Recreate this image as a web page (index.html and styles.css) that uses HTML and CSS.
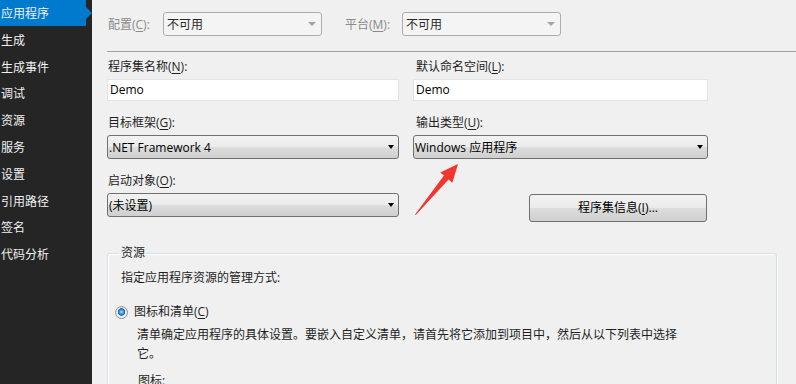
FILE: index.html
```html
<!DOCTYPE html>
<html lang="zh-CN">
<head>
    <meta charset="UTF-8">
    <title>属性 - 应用程序</title>
    <link rel="stylesheet" href="styles.css">
</head>

<body>

<div class="app">
    <ul class="sidebar">
        <li class="current">应用程序</li>
        <li>生成</li>
        <li>生成事件</li>
        <li>调试</li>
        <li>资源</li>
        <li>服务</li>
        <li>设置</li>
        <li>引用路径</li>
        <li>签名</li>
        <li>代码分析</li>
    </ul>

    <div class="main">
        <div class="topbar">
            <span class="top-label first">配置(<u>C</u>):</span>
            <div class="combo disabled"><span>不可用</span><i class="arrow"></i></div>
            <span class="top-label second">平台(<u>M</u>):</span>
            <div class="combo disabled"><span>不可用</span><i class="arrow"></i></div>
        </div>

        <div class="form">
            <div class="field">
                <label>程序集名称(<u>N</u>):</label>
                <div class="textbox">Demo</div>
            </div>
            <div class="field right">
                <label>默认命名空间(<u>L</u>):</label>
                <div class="textbox">Demo</div>
            </div>
            <div class="field">
                <label>目标框架(<u>G</u>):</label>
                <div class="combo"><span>.NET Framework 4</span><i class="arrow"></i></div>
            </div>
            <div class="field right">
                <label>输出类型(<u>U</u>):</label>
                <div class="combo"><span>Windows 应用程序</span><i class="arrow"></i></div>
            </div>
            <div class="field">
                <label>启动对象(<u>O</u>):</label>
                <div class="combo"><span>(未设置)</span><i class="arrow"></i></div>
            </div>
            <div class="field btn-cell">
                <div class="button">程序集信息(<u>I</u>)...</div>
            </div>
        </div>

        <fieldset class="group">
            <legend>资源</legend>
            <p class="intro">指定应用程序资源的管理方式:</p>
            <div class="radio-row">
                <span class="radio"></span>
                <span>图标和清单(<u>C</u>)</span>
            </div>
            <p class="desc">清单确定应用程序的具体设置。要嵌入自定义清单，请首先将它添加到项目中，然后从以下列表中选择它。</p>
            <p class="icon-label">图标:</p>
        </fieldset>

        <!-- 标注箭头 -->
        <svg class="mark" width="60" height="70" viewBox="410 155 60 70">
            <polygon points="415,214.5 444,175.6 440.2,172.4 458,164 452.4,182.8 448.6,179.6 415.8,215" fill="#f2352f"/>
        </svg>
    </div>
</div>

</body>
</html>
```

FILE: styles.css
```css
*{
    margin:0;
    padding:0;
    box-sizing: border-box;
}
body{
    font-family: "Open Sans", "Noto Sans CJK SC", sans-serif;
    font-size: 12px;
    color: #1e1e1e;
}
li{
    list-style-type: none;
}
u{
    text-underline-offset: 2px;
}
.app{
    display: flex;
    width: 796px;
    height: 384px;
    overflow: hidden;
}

/* 左侧导航 */
.sidebar{
    width: 92px;
    flex-shrink: 0;
    background: #252526;
}
.sidebar li{
    width: 86px;
    height: 26.8px;
    line-height: 26.8px;
    padding-left: 1px;
    padding-top: 1px;
    color: #f1f1f1;
    font-size: 12px;
    position: relative;
}
.sidebar li.current{
    background: #007acc;
    height: 26px;
    margin-bottom: 0.8px;
}
.sidebar li.current:after{
    content: "";
    position: absolute;
    right: -6px;
    top: 7px;
    border-left: 6px solid #007acc;
    border-top: 6px solid transparent;
    border-bottom: 6px solid transparent;
}

/* 主区域 */
.main{
    flex: 1;
    background: #f0f0f0;
    position: relative;
}
.topbar{
    display: flex;
    align-items: center;
    height: 52px;
    margin-left: 15px;
    padding-bottom: 4px;
    border-bottom: 1px solid #a0a0a0;
}
.top-label{
    color: #8a8a8a;
    padding-left: 1px;
}
.top-label.first{
    width: 56px;
}
.top-label.second{
    width: 58px;
    margin-left: 22px;
}
.combo{
    width: 100%;
    height: 24px;
    border: 1px solid #707070;
    border-radius: 3px;
    background: linear-gradient(#f2f2f2 0%, #ebebeb 50%, #dddddd 51%, #cfcfcf 100%);
    display: flex;
    align-items: center;
    justify-content: space-between;
    padding: 0 4px 0 1px;
    color: #000;
    font-size: 12px;
}
.combo span{
    font-family: "Open Sans", "Noto Sans CJK SC", sans-serif;
}
.combo .arrow{
    border-left: 3.5px solid transparent;
    border-right: 3.5px solid transparent;
    border-top: 4px solid #000;
}
.combo.disabled{
    width: 159px;
    background: #f4f4f4;
    border-color: #adadad;
    color: #2a2a2a;
    padding-left: 3px;
    padding-right: 5px;
}
.combo.disabled .arrow{
    border-top-color: #a3a3a3;
    border-left-width: 4px;
    border-right-width: 4px;
}

/* 表单 */
.form{
    display: grid;
    grid-template-columns: 292px 295px;
    column-gap: 14px;
    row-gap: 14px;
    margin-left: 15px;
    padding-top: 7px;
}
.field label{
    display: block;
    line-height: 16px;
    height: 16px;
    margin-bottom: 4px;
    padding-left: 1px;
}
.field.right label{
    padding-left: 3px;
}
.textbox{
    height: 22px;
    background: #fff;
    border: 1px solid #e3e3e3;
    line-height: 20px;
    padding-left: 2px;
    color: #000;
}
.btn-cell{
    padding-top: 21px;
}
.button{
    width: 178px;
    height: 28px;
    margin-left: 116px;
    border: 1px solid #707070;
    border-radius: 3px;
    background: linear-gradient(#f2f2f2 0%, #ebebeb 50%, #dddddd 51%, #cfcfcf 100%);
    text-align: center;
    line-height: 26px;
    color: #000;
}

/* 资源分组 */
.group{
    margin: 23px 19px 0 15px;
    border: 1px solid #d5dfe5;
    border-radius: 3px;
    box-shadow: inset 1px 1px 0 #fff, 1px 1px 0 #fff;
    padding: 0 12px 0 7px;
    height: 200px;
}
.group legend{
    line-height: 16px;
    padding: 0 2px;
    margin-left: 4px;
}
.intro{
    line-height: 16px;
    margin: 9px 0 0 6px;
}
.radio-row{
    display: flex;
    align-items: center;
    gap: 6px;
    line-height: 16px;
    margin-top: 18px;
}
.radio{
    width: 13px;
    height: 13px;
    border-radius: 50%;
    border: 1px solid #8e8f8f;
    background: radial-gradient(circle at 50% 45%, #9fe4ff 0, #2a8cd6 2.5px, #1b5fa0 3.5px, #e8e8e8 4px, #f4f4f4 6px);
}
.desc{
    width: 548px;
    line-height: 19px;
    margin: 5px 0 0 22px;
}
.icon-label{
    line-height: 16px;
    margin: 10px 0 0 23px;
}
.mark{
    position: absolute;
    left: 318px;
    top: 155px;
}
```
